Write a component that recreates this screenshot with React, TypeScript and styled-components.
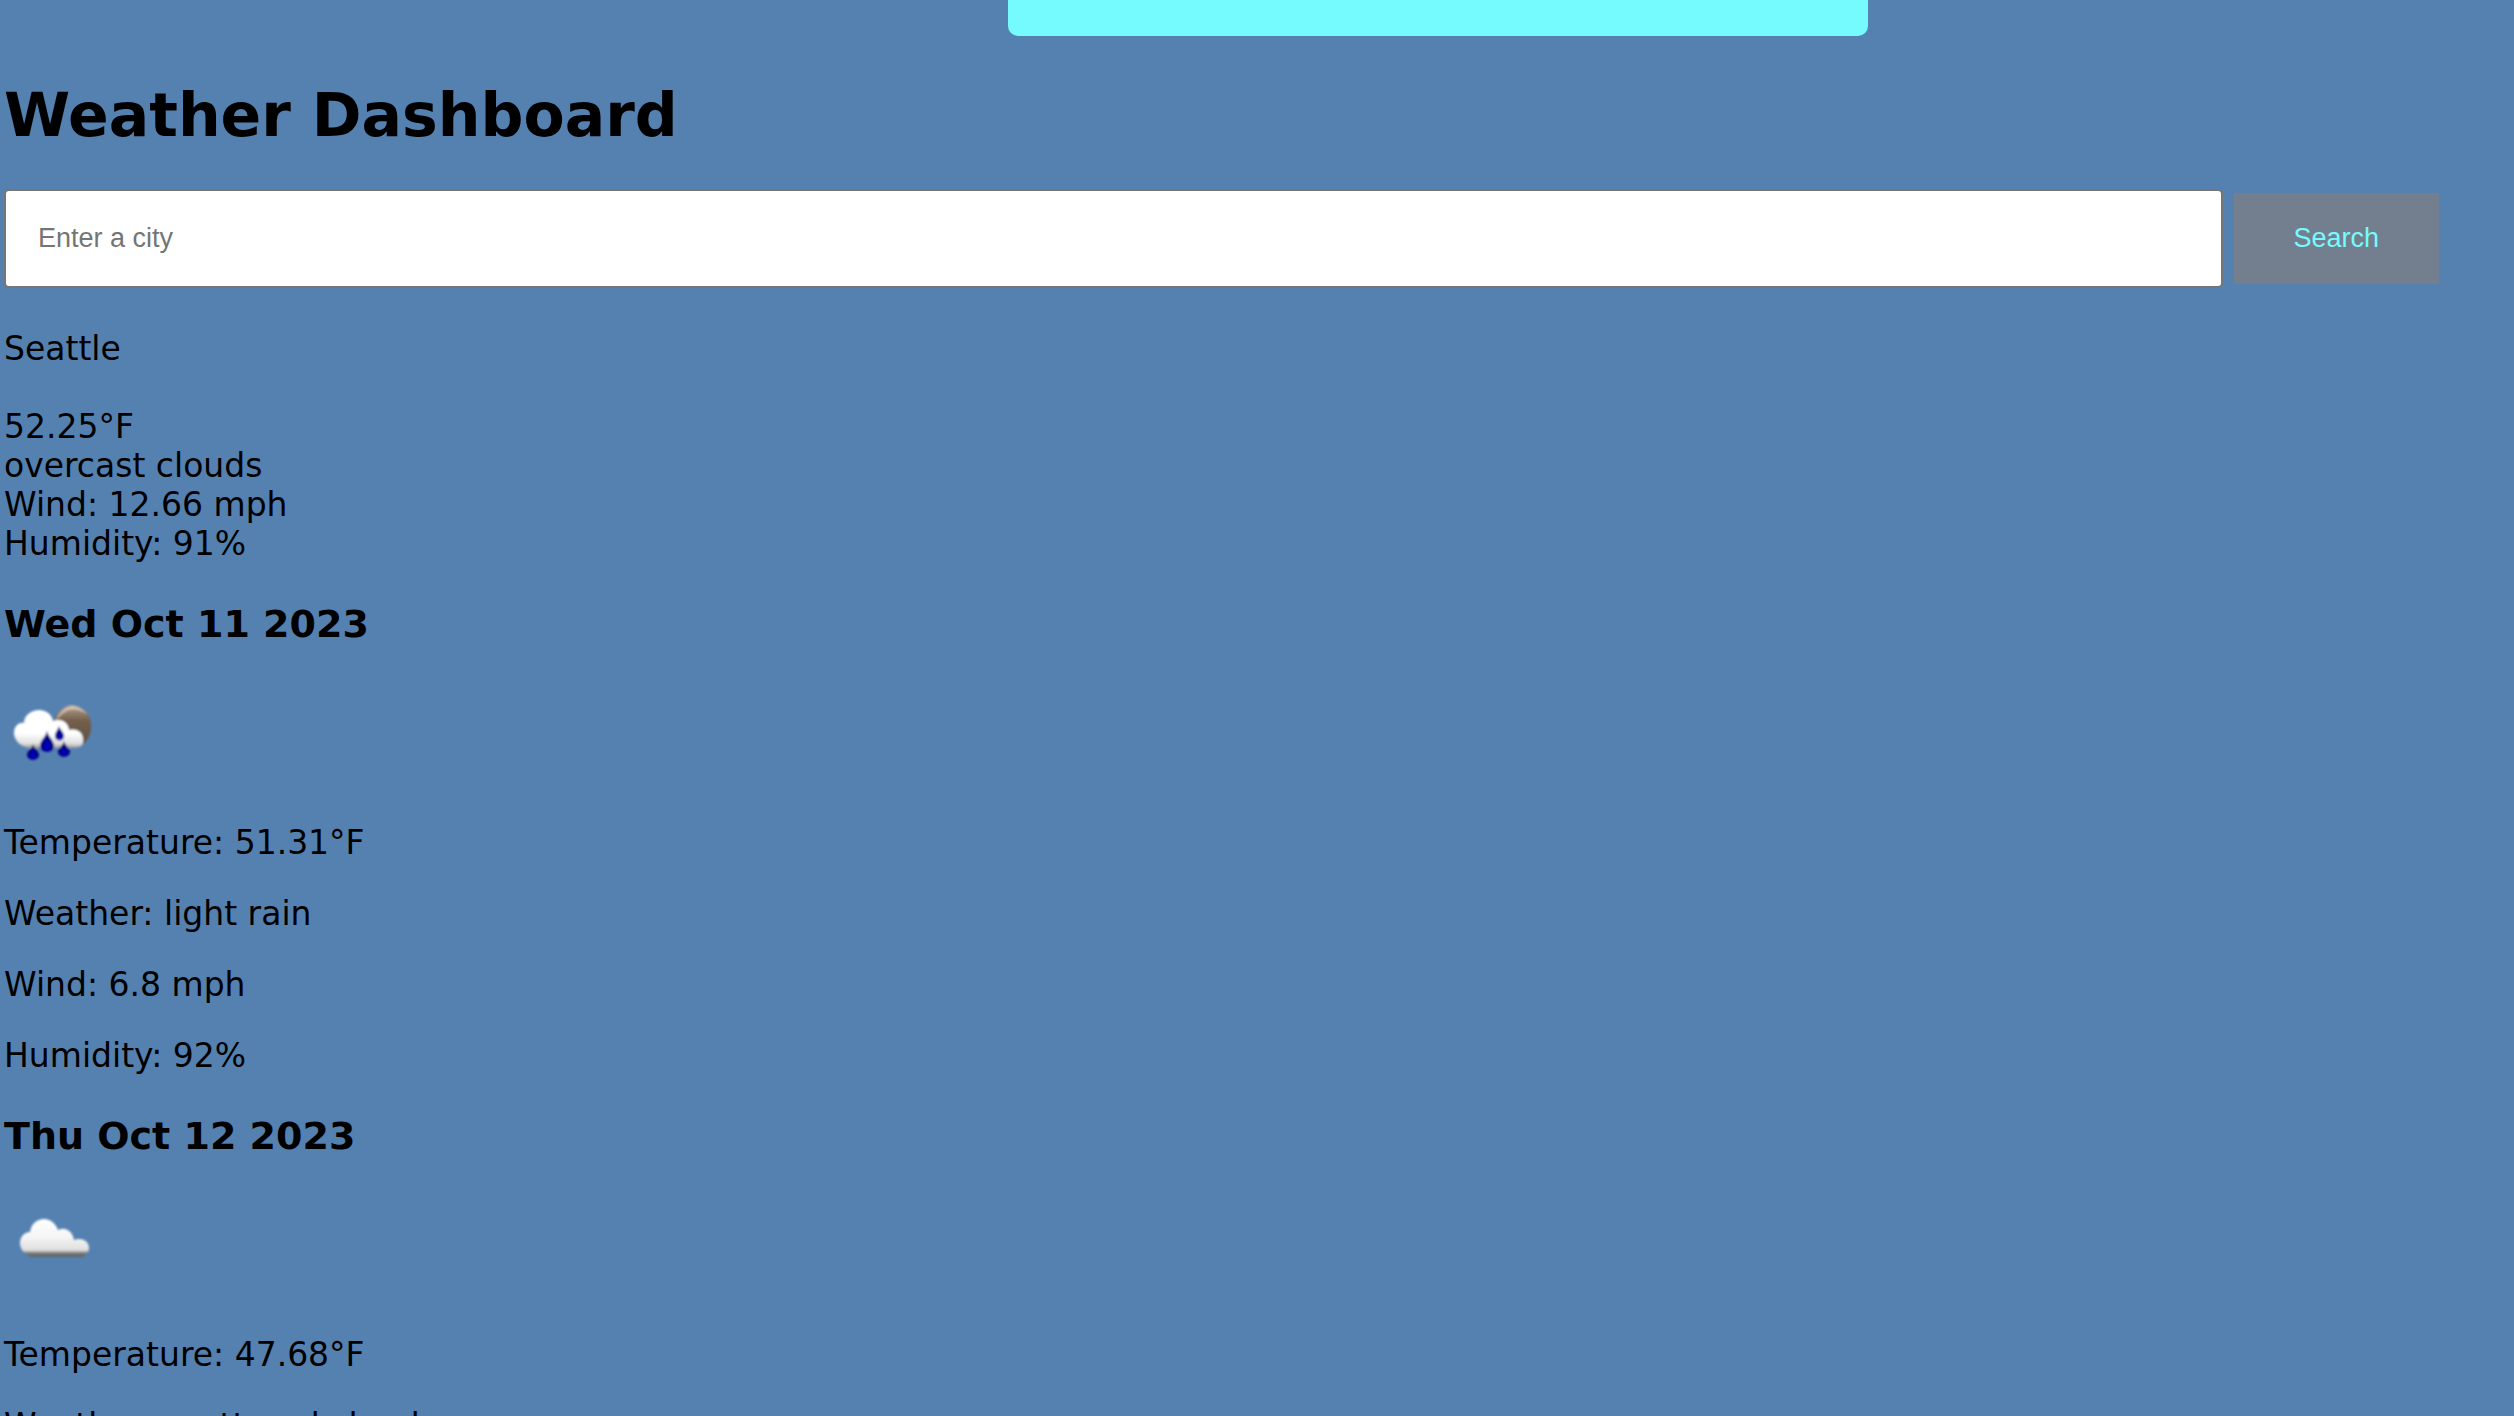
import React from "react";
import styled, { createGlobalStyle } from "styled-components";

const GlobalStyle = createGlobalStyle`
  body {
    margin: 0;
    background: #5581b1;
    color: #000;
    font-family: Verdana, "DejaVu Sans", sans-serif;
    font-size: 33px;
    line-height: 39px;
  }
`;

const Page = styled.div`
  padding: 0 0 0 4px;
  overflow: hidden;
`;

const Banner = styled.header`
  width: 860px;
  max-width: 60%;
  height: 36px;
  margin-left: 40%;
  border-radius: 0 0 10px 10px;
  background: #75fbfd;
`;

const Title = styled.h1`
  margin: 41px 0 35px;
  font-size: 60px;
  line-height: 77px;
  font-weight: bold;
`;

const SearchForm = styled.form`
  display: flex;
  align-items: center;
  gap: 11px;
  width: 97%;
`;

const CityInput = styled.input`
  flex: 1;
  min-width: 0;
  box-sizing: border-box;
  height: 99px;
  padding: 0 32px;
  border: 2px solid #767676;
  border-radius: 5px;
  background: #fff;
  font-family: Arial, "Liberation Sans", sans-serif;
  font-size: 27px;

  &::placeholder {
    color: #757575;
    opacity: 1;
  }
`;

const SearchButton = styled.button`
  width: 205px;
  height: 91px;
  padding: 0;
  border: 0;
  background: #737f8f;
  color: #75fbfd;
  font-family: Arial, "Liberation Sans", sans-serif;
  font-size: 27px;
`;

const Current = styled.section`
  margin-top: 41px;
`;

const CityName = styled.p`
  margin: 0 0 39px;
`;

const Reading = styled.div``;

const Day = styled.article`
  margin-top: 38px;
`;

const DayTitle = styled.h3`
  margin: 0 0 36px;
  font-size: 38px;
  line-height: 46px;
  font-weight: bold;
`;

const WeatherIcon = styled.svg`
  display: block;
  width: 100px;
  height: 100px;
  margin-bottom: 40px;
`;

const Detail = styled.p`
  margin: 0 0 32px;

  &:last-child {
    margin-bottom: 0;
  }
`;

const RainIcon = () => (
  <WeatherIcon viewBox="0 0 100 100" role="img" aria-label="light rain">
    <defs>
      <linearGradient id="rainCloud" x1="0" y1="31" x2="0" y2="66" gradientUnits="userSpaceOnUse">
        <stop offset="0.55" stopColor="#fff" />
        <stop offset="0.85" stopColor="#ddd" />
        <stop offset="1" stopColor="#858585" />
      </linearGradient>
      <linearGradient id="moon" x1="0" y1="22" x2="0" y2="62" gradientUnits="userSpaceOnUse">
        <stop offset="0" stopColor="#b59f8c" />
        <stop offset="0.4" stopColor="#725e4b" />
        <stop offset="1" stopColor="#625242" />
      </linearGradient>
      <radialGradient id="drop" cx="0.5" cy="0.7" r="0.6">
        <stop offset="0" stopColor="#0000c8" />
        <stop offset="1" stopColor="#00005c" />
      </radialGradient>
      <filter id="soft" x="-10%" y="-10%" width="120%" height="120%">
        <feGaussianBlur stdDeviation="0.8" />
      </filter>
    </defs>
    <g filter="url(#soft)">
      <path d="M50 39 C52 28 61 22 69 22 C80 24 87 32 87 41 C88 50 84 58 78 62 L60 60Z" fill="url(#moon)" />
      <path d="M52 37 C56 28 63 23 69 23 C75 24 80 27 83 31 C76 26 66 25 61 29 C57 31 55 35 52 37Z" fill="#e2d5ca" opacity="0.7" />
      <path
        d="M24 65 C16 63 10 57 10 50 C10 43 15 39 20 40 C20 31 29 27 35 27 C43 27 48 32 49 38 C57 35 64 39 65 47 C72 45 79 49 79 56 C80 61 77 65 71 65Z"
        fill="url(#rainCloud)"
      />
      <path d="M43 48 C44 54 50 57 50 63 A7 6 0 0 1 36 63 C36 57 42 54 43 48Z" fill="url(#drop)" />
      <path d="M55 43 C56 47 60 49 60 53 A4 4 0 0 1 51 53 C51 49 54 47 55 43Z" fill="url(#drop)" />
      <path d="M29 61 C30 66 35 68 35 72 A6 5 0 0 1 23 72 C23 68 28 66 29 61Z" fill="url(#drop)" />
      <path d="M60 58 C61 63 66 65 66 69 A6 5 0 0 1 54 69 C54 65 59 63 60 58Z" fill="url(#drop)" />
    </g>
  </WeatherIcon>
);

const CloudIcon = () => (
  <WeatherIcon viewBox="0 0 100 100" role="img" aria-label="scattered clouds">
    <defs>
      <linearGradient id="dryCloud" x1="0" y1="24" x2="0" y2="62" gradientUnits="userSpaceOnUse">
        <stop offset="0" stopColor="#fff" />
        <stop offset="0.5" stopColor="#f4f4f4" />
        <stop offset="0.82" stopColor="#dedede" />
        <stop offset="0.9" stopColor="#777" />
        <stop offset="1" stopColor="#5c6064" />
      </linearGradient>
      <filter id="softCloud" x="-10%" y="-10%" width="120%" height="120%">
        <feGaussianBlur stdDeviation="0.8" />
      </filter>
    </defs>
    <path
      filter="url(#softCloud)"
      d="M27 62 C20 59 16 54 16 48 C16 42 20 37 26 37 C27 29 33 24 40 24 C47 24 52 29 54 35 C62 31 69 37 70 45 C78 42 85 46 85 53 C85 57 82 60 79 62Z"
      fill="url(#dryCloud)"
    />
  </WeatherIcon>
);

const current = ["52.25°F", "overcast clouds", "Wind: 12.66 mph", "Humidity: 91%"];

const forecast = [
  {
    date: "Wed Oct 11 2023",
    icon: <RainIcon />,
    details: ["Temperature: 51.31°F", "Weather: light rain", "Wind: 6.8 mph", "Humidity: 92%"],
  },
  {
    date: "Thu Oct 12 2023",
    icon: <CloudIcon />,
    details: ["Temperature: 47.68°F", "Weather: scattered clouds"],
  },
];

export default function App() {
  return (
    <>
      <GlobalStyle />
      <Page>
        <Banner />
        <main>
          <Title>Weather Dashboard</Title>
          <SearchForm onSubmit={(event) => event.preventDefault()}>
            <CityInput type="text" aria-label="City" placeholder="Enter a city" />
            <SearchButton type="submit">Search</SearchButton>
          </SearchForm>
          <Current>
            <CityName>Seattle</CityName>
            {current.map((line) => (
              <Reading key={line}>{line}</Reading>
            ))}
          </Current>
          {forecast.map((day) => (
            <Day key={day.date}>
              <DayTitle>{day.date}</DayTitle>
              {day.icon}
              {day.details.map((line) => (
                <Detail key={line}>{line}</Detail>
              ))}
            </Day>
          ))}
        </main>
      </Page>
    </>
  );
}
